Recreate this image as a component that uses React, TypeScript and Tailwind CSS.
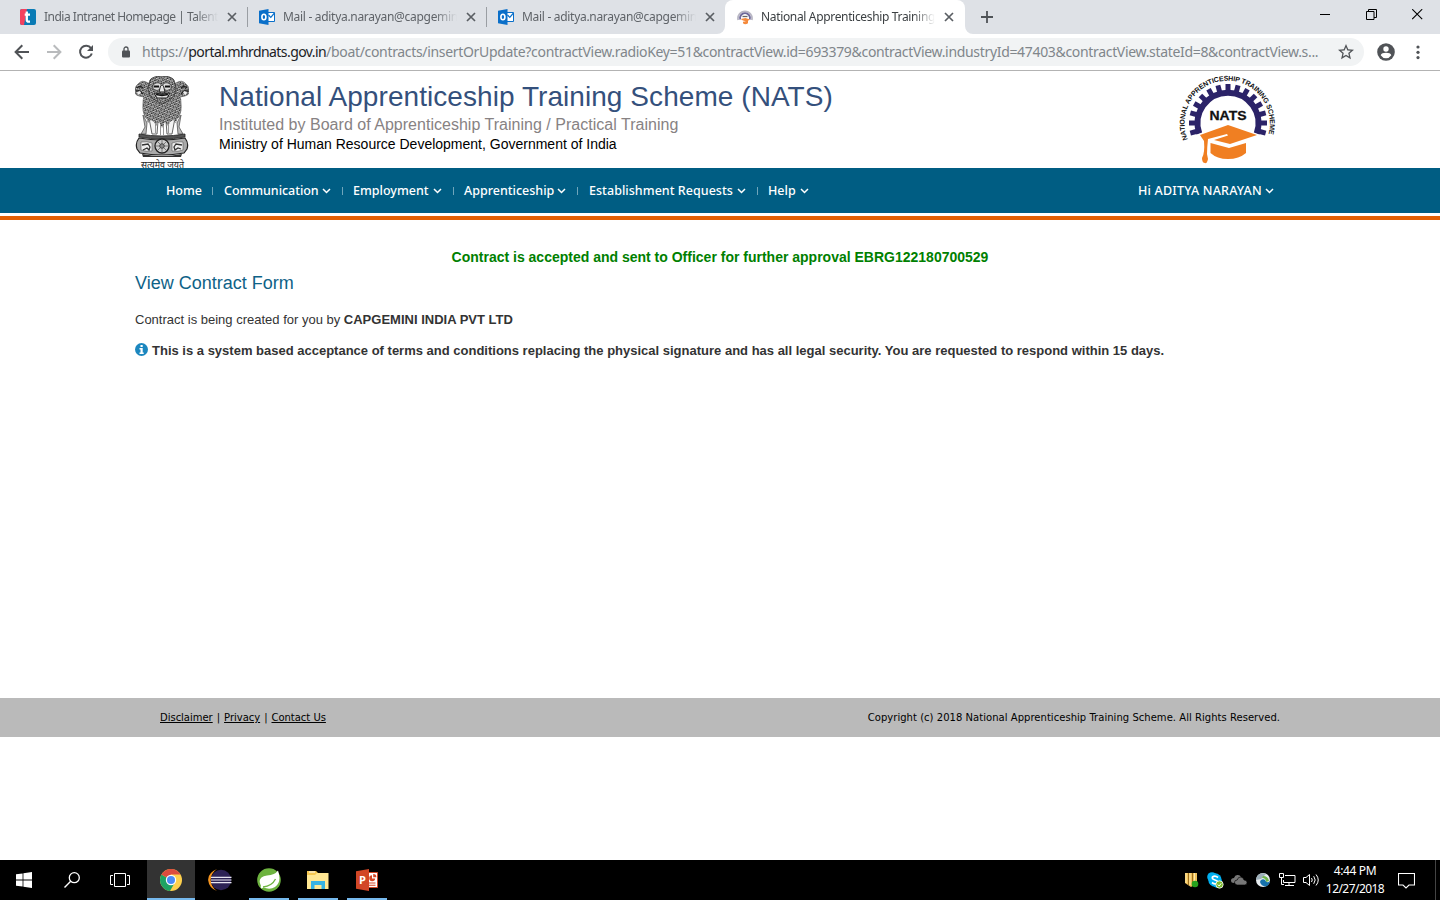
import type { ReactNode } from 'react';

const segoe = "font-['Noto_Sans',sans-serif]";

function CloseIcon() {
  return (
    <svg width="10" height="10" viewBox="0 0 10 10" className="shrink-0">
      <path d="M1 1l8 8M9 1L1 9" stroke="#5a5e63" strokeWidth="1.7" fill="none" />
    </svg>
  );
}

function TalentIcon() {
  return (
    <svg width="16" height="16" viewBox="0 0 16 16" className="shrink-0">
      <rect width="16" height="16" rx="2" fill="#0a7bb5" />
      <path d="M2 0h5L4 16H2a2 2 0 0 1-2-2V2a2 2 0 0 1 2-2z" fill="#f4415f" />
      <path d="M6.8 2.5v8.2q0 2 2 2h1.2M4.7 5.6H10" stroke="#fff" strokeWidth="2.3" fill="none" />
    </svg>
  );
}

function OutlookIcon() {
  return (
    <svg width="16" height="16" viewBox="0 0 16 16" className="shrink-0">
      <path d="M8 3.5h7.500v9H8z" fill="#fff" stroke="#0a6fc9" strokeWidth="1" />
      <path d="M9.500 6l2.300 2.300L15.500 4" stroke="#0a6fc9" strokeWidth="1.2" fill="none" />
      <path d="M0 1.700L9.500 0v16L0 14.300z" fill="#0a6fc9" />
      <ellipse cx="4.900" cy="8" rx="2" ry="2.700" fill="none" stroke="#fff" strokeWidth="1.600" />
    </svg>
  );
}

function NatsFavicon() {
  return (
    <svg width="16" height="16" viewBox="0 0 16 16" className="shrink-0">
      <path d="M1.2 11A7 7 0 1 1 14.8 11" fill="none" stroke="#b9b7c4" strokeWidth="1.8" />
      <path d="M3.2 10.5A5 5 0 1 1 12.8 10.5" fill="none" stroke="#6d6899" strokeWidth="1.800" />
      <path d="M5.500 7.500h5" stroke="#666" strokeWidth="1.300" />
      <path d="M3.500 10l5-1 4.500 1.500-2 1.200v2.500q-3 2-5 0v-1.500l3-.5-3-.7z" fill="#f58a3c" />
    </svg>
  );
}

function Tab({ icon, title, tracking, active, sep }: { icon: ReactNode; title: string; tracking: string; active?: boolean; sep?: boolean }) {
  return (
    <div className={`relative flex h-[34px] shrink-0 items-center pl-3 ${active ? 'z-10 w-[240px] rounded-t-lg bg-white' : 'w-[239px]'}`}>
      {icon}
      <div className={`ml-2 w-[174px] shrink-0 overflow-hidden whitespace-nowrap text-[12px] leading-[18px] ${tracking} ${active ? 'text-[#3c4043]' : 'text-[#5f6368]'} [mask-image:linear-gradient(to_right,black_87%,transparent)]`}>
        {title}
      </div>
      <div className="ml-[9px] flex"><CloseIcon /></div>
      {sep && <div className="ml-[10px] h-5 w-px shrink-0 bg-[#9a9ea3]" />}
      {active && (
        <>
          <svg className="absolute bottom-0 -left-2" width="8" height="8"><path d="M8 0v8H0a8 8 0 0 0 8-8z" fill="#fff" /></svg>
          <svg className="absolute bottom-0 -right-2" width="8" height="8"><path d="M0 0v8h8a8 8 0 0 1-8-8z" fill="#fff" /></svg>
        </>
      )}
    </div>
  );
}

function TabStrip() {
  return (
    <div className="flex h-[34px] bg-[#dee1e6] pl-2">
      <Tab icon={<TalentIcon />} title="India Intranet Homepage | Talent" tracking="tracking-[-0.5px]" sep />
      <Tab icon={<OutlookIcon />} title="Mail - aditya.narayan@capgemini.com" tracking="tracking-[-0.3px]" sep />
      <Tab icon={<OutlookIcon />} title="Mail - aditya.narayan@capgemini.com" tracking="tracking-[-0.3px]" />
      <Tab icon={<NatsFavicon />} title="National Apprenticeship Training Scheme" tracking="tracking-[-0.34px]" active />
      <svg className="mt-[11px] ml-[16px]" width="12" height="12"><path d="M6 0v12M0 6h12" stroke="#4f5357" strokeWidth="1.8" /></svg>
      <div className="mt-[9px] mr-[17px] ml-auto flex gap-[35px]">
        <svg width="11" height="11"><path d="M0 5.500h10" stroke="#000" /></svg>
        <svg width="11" height="11" fill="none" stroke="#000"><path d="M.5 2.500h7.500v8H.5zM2.500 2.500v-2h8v8H8" /></svg>
        <svg width="11" height="11"><path d="M.2.200l10 10M10.200.200l-10 10" stroke="#000" strokeWidth="1.100" /></svg>
      </div>
    </div>
  );
}

function Toolbar() {
  return (
    <div className="flex h-[37px] items-center border-b border-[#b3b3b3] bg-white pl-[14px]">
      <svg width="16" height="16" fill="none" stroke="#505357" strokeWidth="2"><path d="M15 8H2M8.300 1.300L1.600 8l6.700 6.700" /></svg>
      <svg className="ml-4" width="16" height="16" fill="none" stroke="#b9bbbd" strokeWidth="2"><path d="M1 8h13M7.700 1.300L14.400 8l-6.700 6.700" /></svg>
      <svg className="ml-4" width="16" height="16" viewBox="0 0 16 16"><path d="M13 4.200A6 6 0 1 0 13.800 9.500" fill="none" stroke="#505357" strokeWidth="2" /><path d="M15 1v6H9z" fill="#505357" /></svg>
      <div className="ml-[14px] flex h-7 w-[1256px] items-center rounded-full bg-[#f1f3f4] pl-[14px]">
        <svg width="8" height="12" viewBox="0 0 8 12"><path d="M2 5V3a2 2 0 0 1 4 0v2" fill="none" stroke="#505357" strokeWidth="1.300" /><rect y="4.500" width="8" height="7" rx="1" fill="#505357" /></svg>
        <div className="ml-3 w-[1180px] shrink-0 whitespace-nowrap text-[14px] leading-5 tracking-[-0.325px] text-[#80868b]">
          <span className="tracking-[-0.25px]">https://</span><span className="tracking-[-0.57px] text-[#202124]">portal.mhrdnats.gov.in</span>/boat/contracts/insertOrUpdate?contractView.radioKey=51&amp;contractView.id=693379&amp;contractView.industryId=47403&amp;contractView.stateId=8&amp;contractView.s...
        </div>
        <svg className="ml-[16px] shrink-0" width="16" height="16" viewBox="2 2 20 20"><path d="M22 9.240l-7.190-.620L12 2 9.190 8.630 2 9.240l5.460 4.730L5.820 21 12 17.270 18.180 21l-1.630-7.030L22 9.240zM12 15.400l-3.760 2.270 1-4.280-3.320-2.880 4.380-.380L12 6.100l1.710 4.040 4.380.380-3.320 2.880 1 4.280L12 15.400z" fill="#505357" /></svg>
      </div>
      <svg className="ml-[13px]" width="18" height="18" viewBox="0 0 18 18"><circle cx="9" cy="9" r="8.800" fill="#505357" /><circle cx="9" cy="6" r="2.700" fill="#fff" /><path d="M3.700 12.200q1-2.400 5.300-2.400t5.300 2.400q-2 3-5.300 3t-5.300-3z" fill="#fff" /></svg>
      <svg className="ml-[21px]" width="4" height="16" fill="#505357"><circle cx="2" cy="3" r="1.600" /><circle cx="2" cy="8.300" r="1.600" /><circle cx="2" cy="13.600" r="1.600" /></svg>
    </div>
  );
}

function Emblem() {
  return (
    <svg className="mt-[5px] shrink-0" width="54" height="92" viewBox="0 0 54 92">
      <defs>
        <pattern id="curls" width="3.500" height="3.500" patternUnits="userSpaceOnUse" patternTransform="rotate(24)">
          <rect width="3.500" height="3.500" fill="#a2a2a2" />
          <path d="M0 1q1.300 2 2.600 0M1.800 2.600q.8 1.300 1.700 0" fill="none" stroke="#222" strokeWidth=".9" />
          <path d="M1 2.300h.8M2.600.5h.9" stroke="#eee" strokeWidth=".7" />
        </pattern>
      </defs>
      <path d="M13 7Q7 3 3 8q-4 3-3 8 0 3 4 4l5 1q-1 2-1 6-1 8 2 14l8 6q9 3 18 0l8-6q3-6 2-14 0-4-1-6l5-1q4-1 4-4 1-5-3-8-4-5-10-1z" fill="url(#curls)" stroke="#555" strokeWidth=".6" />
      <path d="M15 4Q18 0 27 0t12 4l2 9q-1 7-5 10l-9 5-9-5q-4-3-5-10z" fill="url(#curls)" stroke="#333" strokeWidth=".8" />
      <path d="M18 9q4-4 8-1v5q-4 3-8 0zM36 9q-4-4-8-1v5q4 3 8 0z" fill="#ddd" stroke="#333" strokeWidth=".8" />
      <path d="M19 10.500h5M30 10.500h5" stroke="#111" strokeWidth="1.800" />
      <path d="M25.500 10l-1.500 6h6l-1.500-6M19 17q8 2 16 0l-3 5H22z" fill="#e4e4e4" stroke="#222" strokeWidth="1" />
      <path d="M21 18.500q6 1.500 12 0" stroke="#111" strokeWidth="1.800" fill="none" />
      <path d="M2 12q3-3 6 0M1 15h4l3 3M46 12q3-3 6 0M53 15h-4l-3 3" fill="none" stroke="#222" strokeWidth="1.300" />
      <path d="M2 16l3-1 1 2-3 2zM52 16l-3-1-1 2 3 2z" fill="#eee" />
      <path d="M9 44h36l-1 16H10z" fill="#fff" />
      <path d="M8 39l4 8-1 11H6l4-7zM46 39l-4 8 1 11h5l-4-7z" fill="#bbb" stroke="#555" strokeWidth=".8" />
      <path d="M14 42q4 4 9 3l-1 13h-5zM40 42q-4 4-9 3l1 13h5z" fill="#f4f4f4" stroke="#555" strokeWidth=".9" />
      <path d="M20.500 46v11M33.500 46v11M25.500 45v14M28.500 45v14" fill="none" stroke="#999" strokeWidth="1" />
      <path d="M10 38q17 9 34 0l-3 9-3-3-3 2-2 4-3-4-3 6-3-6-3 4-2-4-3-2-3 3z" fill="url(#curls)" />
      <path d="M4 58q23 4 46 0v3q-23 4-46 0z" fill="#555" stroke="#222" strokeWidth=".8" />
      <path d="M4 62q23 4 46 0 4 5 2 11l-3 4q-22 4-44 0l-3-4q-2-6 2-11z" fill="#aaa" stroke="#222" strokeWidth="1.200" />
      <path d="M6 66q6-1 11 1v8q-6 1-11-1zM48 66q-6-1-11 1v8q6 1 11-1z" fill="#eee" stroke="#555" strokeWidth=".6" />
      <path d="M7 69l6-1 2 3-1 3-2-2-4 2M47 69l-6-1-2 3 1 3 3-2 3 1" fill="none" stroke="#333" strokeWidth="1.300" />
      <circle cx="27" cy="70" r="7" fill="#ccc" stroke="#222" strokeWidth="1.300" />
      <path d="M20 70h14M27 63v14M22 65l10 10M32 65L22 75" stroke="#555" strokeWidth=".7" />
      <circle cx="27" cy="70" r="2.300" fill="#888" stroke="#333" strokeWidth=".8" />
      <path d="M7 78q20 4 40 0l-1 3H8z" fill="#333" />
      <text x="6" y="92" textLength="43" lengthAdjust="spacingAndGlyphs" fontSize="9" fill="#222" fontFamily="'Noto Sans Devanagari','Noto Sans',sans-serif">सत्यमेव जयते</text>
    </svg>
  );
}

const teeth = Array.from({ length: 15 }, (_, i) => -105 + i * 15);

function NatsLogo() {
  return (
    <svg className="-mt-[3px] ml-auto shrink-0" width="115" height="100" viewBox="0 0 115 100">
      <defs><path id="ring" d="M17.700 71.500A42.700 42.700 0 1 1 96.800 71.500" /></defs>
      <path d="M29.300 65.500A30.500 30.500 0 1 1 86.700 65.500" fill="none" stroke="#2b2368" strokeWidth="6" />
      {teeth.map((a) => <rect key={a} x="55.500" y="16" width="5" height="8" fill="#2b2368" transform={`rotate(${a} 58 55)`} />)}
      <text fontSize="7" fontWeight="700" fill="#111" fontFamily="'Liberation Sans',sans-serif">
        <textPath href="#ring" textLength="161">NATIONAL APPRENTICESHIP TRAINING SCHEME</textPath>
      </text>
      <text x="58" y="52" textAnchor="middle" fontSize="13.500" fontWeight="700" textLength="37" lengthAdjust="spacingAndGlyphs" fill="#111" stroke="#111" strokeWidth=".3" fontFamily="'Liberation Sans',sans-serif">NATS</text>
      <path d="M30 67l28-10 29 10-27 9-16-4 14-4.500-1-1.500-19 5q-1 9-1 15l1 5q-1 5-3 4-3 0-3-5 3-5 2-17z" fill="#f07f22" />
      <path d="M40.500 75l18.500 5 17-5v10q-7 6-18 6t-17.500-6z" fill="#f07f22" />
    </svg>
  );
}

function Chevron() {
  return <svg className="-mt-px shrink-0" width="9" height="6"><path d="M1 1l3.500 3.500L8 1" fill="none" stroke="#fff" strokeWidth="1.500" /></svg>;
}

function NavItem({ label, width, last }: { label: string; width: string; last?: boolean }) {
  return (
    <div className={`flex items-center ${width}`}>
      <span>{label}</span>
      {label !== 'Home' && <span className="ml-auto flex"><Chevron /></span>}
      {!last && <i className={`${label === 'Home' ? 'ml-auto' : 'ml-[11px]'} mr-[11px] h-2 w-px bg-[#6fa5bb]`} />}
    </div>
  );
}

function TaskIcon({ children, open, active }: { children: ReactNode; open?: boolean; active?: boolean }) {
  return (
    <div className={`flex h-10 items-center justify-center ${active ? 'w-12 border-b-2 border-[#76b9ed] bg-[#333] pt-[2px]' : open ? 'ml-[9px] w-10 border-b-2 border-[#76b9ed] pt-[2px]' : 'w-12'}`}>
      {children}
    </div>
  );
}

function Taskbar() {
  return (
    <div className="flex h-10 items-center bg-black">
      <TaskIcon><svg width="16" height="16" fill="#fff"><path d="M0 2.300l6.600-.9v6.200H0zM7.400 1.200L16 0v7.600H7.400zM0 8.400h6.600v6.200L0 13.700zM7.400 8.400H16V16l-8.600-1.200z" /></svg></TaskIcon>
      <TaskIcon><svg width="16" height="16" fill="none" stroke="#fff"><circle cx="10.300" cy="5.700" r="5" strokeWidth="1.300" /><path d="M6.700 9.300L.5 15.500" strokeWidth="1.400" /></svg></TaskIcon>
      <TaskIcon><svg width="20" height="14" fill="none" stroke="#fff"><path d="M4.500.500h11v13h-11zM3 2.500H.5v9H3M17 2.500h2.500v9H17" /></svg></TaskIcon>
      <div className="w-[3px]" />
      <TaskIcon active>
        <svg width="22" height="22" viewBox="0 0 22 22">
          <circle cx="11" cy="11" r="11" fill="#fdd04d" />
          <path d="M11 11L1.500 5.500A11 11 0 0 0 10 22l5-8.700z" fill="#1da362" />
          <path d="M11 11L1.500 5.500A11 11 0 0 1 20.500 5.500H11z" fill="#dc4b3e" />
          <circle cx="11" cy="11" r="5.200" fill="#fff" /><circle cx="11" cy="11" r="4" fill="#4b8bf5" />
        </svg>
      </TaskIcon>
      <div className="ml-px">
        <TaskIcon>
          <svg width="24" height="22" viewBox="0 0 24 22"><path d="M9 0Q-.5 4 .2 11.500 1 19 9 22 3 18 2.700 11 3 4 9 0z" fill="#f5941f" /><circle cx="13" cy="11" r="10.200" fill="#2c2255" /><path d="M3 8.300h20.500M3 11h20.500M3 13.700h20.500" stroke="#e8e6f2" strokeWidth="1.200" /></svg>
        </TaskIcon>
      </div>
      <div className="-ml-[4px]"><TaskIcon open>
        <svg width="24" height="24" viewBox="0 0 24 24"><circle cx="12" cy="12" r="11.800" fill="#6db33f" /><path d="M21 2.500Q25 14 18 19 13 22 6.500 19.500L4.500 20.500Q3 19.500 4 18-.5 9 10 7.500q8-.5 11-5z" fill="#fff" /><path d="M6 19Q15 18 18.500 11" fill="none" stroke="#6db33f" strokeWidth="1.300" /></svg>
      </TaskIcon></div>
      <TaskIcon open>
        <svg width="22" height="18" viewBox="0 0 22 18"><path d="M0 0h9l2 2h10v16H0z" fill="#f5c751" /><path d="M0 4h8l2-2h11.500v16H0z" fill="#ffe793" /><path d="M2 1h6" stroke="#fff" strokeWidth="1" /><path d="M4 10h14v8h-3.500v-4h-7v4H4z" fill="#36b3e4" /></svg>
      </TaskIcon>
      <TaskIcon open>
        <svg width="22" height="22" viewBox="0 0 22 22"><path d="M11 3.500h10.500v15H11z" fill="#fff" stroke="#d24726" /><path d="M13 14h6.500M13 16.300h6.500" stroke="#d24726" strokeWidth="1.100" /><path d="M16 6.200a3 3 0 1 0 3.200 3.200H16zM17.200 5v3.200h3.200A3.200 3.200 0 0 0 17.200 5z" fill="#d24726" /><path d="M0 2.300L13 0v22L0 19.700z" fill="#d24726" /><text x="2.900" y="15" fontSize="11" fontWeight="700" fill="#fff" fontFamily="'Open Sans',sans-serif">P</text></svg>
      </TaskIcon>
      <div className="ml-auto flex h-10 items-center">
        <svg width="14" height="16" viewBox="0 0 14 16"><path d="M0 1h12v10l-6 4-6-4z" fill="#f0c25a" /><path d="M3.500 1v12M7.500 1v12" stroke="#9c6d1c" /><path d="M1 1v10M5 1v12M9.500 1v8" stroke="#ffebad" /><circle cx="10" cy="12" r="3.300" fill="#27a21e" /></svg>
        <svg className="ml-2" width="17" height="17" viewBox="0 0 17 17"><circle cx="5" cy="5" r="4.800" fill="#00aff0" /><circle cx="8" cy="8" r="6.700" fill="#00aff0" /><circle cx="10.500" cy="11" r="4.800" fill="#00aff0" /><path d="M11 5.500Q8 3 5.500 5q-1 2 2.500 3t2.500 3Q8 13 5 10.500" fill="none" stroke="#fff" strokeWidth="1.700" /><circle cx="12.500" cy="12.500" r="3.700" fill="#7dbb2f" stroke="#fff" strokeWidth=".8" /><path d="M10.700 12.500l1.500 1.500 2-2.700" fill="none" stroke="#fff" /></svg>
        <svg className="-mt-px ml-[7px]" width="16" height="11" viewBox="0 0 16 11"><path d="M3 9Q0 9 0 6.500t3-2.600Q4 .5 7 1q2 0 3 2" fill="#777" /><path d="M6 11q-2.500-.5-2.500-2.700T6.200 6Q7 2.700 10 3q2.500.3 3 3 3 0 3 2.500T13.500 11z" fill="#777" stroke="#000" strokeWidth=".6" /></svg>
        <svg className="ml-[8px]" width="16" height="16" viewBox="0 0 16 16"><circle cx="8" cy="8" r="7" fill="#e7edf0" /><path d="M1 8a7 7 0 0 1 10-6L6 7z" fill="#9dafb9" /><path d="M10 8a3 3 0 0 0-5 2q1 4 6 4.500A7 7 0 0 0 15 9q-3 3-5-1z" fill="#1671ac" /><path d="M8 4q5 0 6 5l-3 1q0-4-4-4z" fill="#70b74d" /></svg>
        <svg className="ml-[8px]" width="17" height="16" viewBox="0 0 17 16" fill="none" stroke="#fff"><path d="M6 3.500h10v7H4.500V8M10 10.500v3M6 13.500h9M.5 1.500h4v4h-4zM2.500 5.500v7H5" /></svg>
        <svg className="ml-[7px]" width="17" height="14" viewBox="0 0 17 14" fill="none" stroke="#fff"><path d="M.5 4.500H3l3.500-3v11l-3.500-3H.5zM8.500 5q1.500 2 0 4M10.700 3.200q3 3.800 0 7.600M13 1.500q4.500 5.500 0 11" /></svg>
        <div className="ml-[5px] w-[60px] text-center text-[12px] leading-[18px] whitespace-nowrap text-white">
          <div className="tracking-[-0.35px]">4:44 PM</div>
          <div className="tracking-[-0.55px]">12/27/2018</div>
        </div>
        <svg className="ml-[13px]" width="17" height="17" viewBox="0 0 17 17" fill="none" stroke="#fff" strokeWidth="1.100"><path d="M.5 1.500h16v11.500h-5.500l-3 3-3-3H.5z" /></svg>
        <div className="ml-[20px] h-10 w-px bg-[#444]" />
        <div className="w-1" />
      </div>
    </div>
  );
}

export default function App() {
  return (
    <div className={`flex h-[900px] w-[1440px] flex-col overflow-hidden bg-white ${segoe}`}>
      <TabStrip />
      <Toolbar />
      <header className="flex h-[97px] overflow-hidden pr-[155px] pl-[135px] font-['Liberation_Sans',Arial,sans-serif]">
        <Emblem />
        <div className="ml-[30px] whitespace-nowrap">
          <h1 className="mt-[9px] text-[28px] leading-[34px] tracking-[0.06px] text-[#34507c]">National Apprenticeship Training Scheme (NATS)</h1>
          <div className="pt-px text-[16px] leading-[20px] tracking-[0.02px] text-[#878283]">Instituted by Board of Apprenticeship Training / Practical Training</div>
          <div className="text-[14px] leading-[18px] text-black">Ministry of Human Resource Development, Government of India</div>
        </div>
        <NatsLogo />
      </header>
      <nav className="flex h-[45px] items-center bg-[#005d83] pt-px pl-[166px] font-['Noto_Sans',sans-serif] text-[12.500px] font-medium tracking-[0px] whitespace-nowrap text-white">
        <NavItem label="Home" width="w-[58px]" />
        <div className="flex tracking-[-0.05px]"><NavItem label="Communication" width="w-[130px]" /></div>
        <div className="-ml-px flex"><NavItem label="Employment" width="w-[112px]" /></div>
        <div className="-ml-px flex"><NavItem label="Apprenticeship" width="w-[125px]" /></div>
        <div className="flex tracking-[0.04px]"><NavItem label="Establishment Requests" width="w-[180px]" /></div>
        <div className="-ml-px flex"><NavItem label="Help" width="w-[41px]" last /></div>
        <div className="mr-[166px] ml-auto flex w-[136px] items-center tracking-[0.2px]">
          <span>Hi ADITYA NARAYAN</span><span className="ml-auto flex"><Chevron /></span>
        </div>
      </nav>
      <div className="mt-[3px] h-1 shrink-0 bg-[#e25f05]" />
      <main className="h-[478px] px-[135px] font-['Liberation_Sans',Arial,sans-serif] whitespace-nowrap text-[#333]">
        <p className="mt-[27px] text-center text-[14px] leading-5 font-bold text-[#008000]">Contract is accepted and sent to Officer for further approval EBRG122180700529</p>
        <h2 className="mt-[4px] text-[18px] leading-6 text-[#0e6287]">View Contract Form</h2>
        <p className="mt-[15px] text-[13px] leading-5">Contract is being created for you by <b>CAPGEMINI INDIA PVT LTD</b></p>
        <div className="mt-[11px] flex items-center text-[13px] leading-5 font-bold">
          <svg className="-mt-[3px] mr-1" width="13" height="13" viewBox="0 0 13 13"><circle cx="6.500" cy="6.500" r="6.500" fill="#1c87bf" /><path d="M5.500 2h2.200v2H5.500zM4.500 5h3.200v4.500h1V11H4.500V9.500h1v-3h-1z" fill="#fff" /></svg>
          <span>This is a system based acceptance of terms and conditions replacing the physical signature and has all legal security. You are requested to respond within 15 days.</span>
        </div>
      </main>
      <footer className="flex h-[39px] items-center justify-between bg-[#bababa] px-[160px] font-['DejaVu_Sans',Verdana,sans-serif] text-[10px] whitespace-nowrap text-black">
        <div className="flex tracking-[-0.02px]"><span className="underline">Disclaimer</span><span className="mx-1">|</span><span className="underline">Privacy</span><span className="mx-1">|</span><span className="underline">Contact Us</span></div>
        <div className="tracking-[0.036px]">Copyright (c) 2018 National Apprenticeship Training Scheme. All Rights Reserved.</div>
      </footer>
      <div className="mt-auto"><Taskbar /></div>
    </div>
  );
}
